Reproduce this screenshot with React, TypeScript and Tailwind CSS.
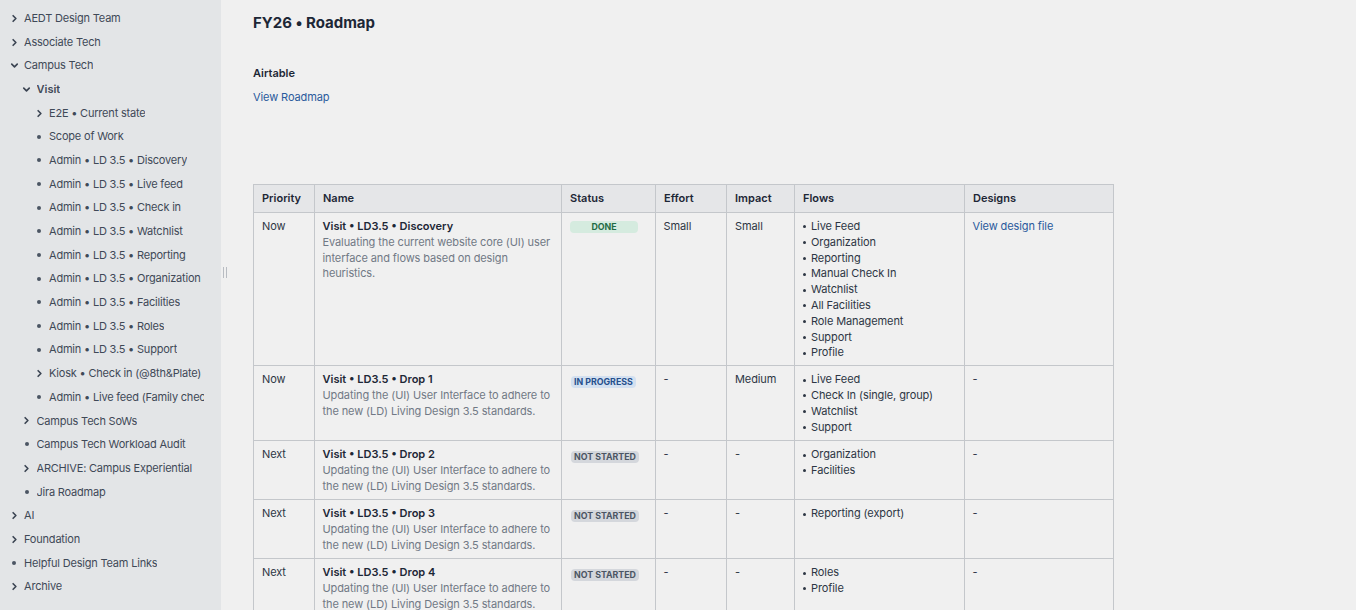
import { ChevronRight, ChevronDown } from 'lucide-react'

type Node = { label: string; depth: number; icon: 'right' | 'down' | 'dot'; bold?: boolean }

const tree: Node[] = [
  { label: 'AEDT Design Team', depth: 0, icon: 'right' },
  { label: 'Associate Tech', depth: 0, icon: 'right' },
  { label: 'Campus Tech', depth: 0, icon: 'down' },
  { label: 'Visit', depth: 1, icon: 'down', bold: true },
  { label: 'E2E • Current state', depth: 2, icon: 'right' },
  { label: 'Scope of Work', depth: 2, icon: 'dot' },
  { label: 'Admin • LD 3.5 • Discovery', depth: 2, icon: 'dot' },
  { label: 'Admin • LD 3.5 • Live feed', depth: 2, icon: 'dot' },
  { label: 'Admin • LD 3.5 • Check in', depth: 2, icon: 'dot' },
  { label: 'Admin • LD 3.5 • Watchlist', depth: 2, icon: 'dot' },
  { label: 'Admin • LD 3.5 • Reporting', depth: 2, icon: 'dot' },
  { label: 'Admin • LD 3.5 • Organization', depth: 2, icon: 'dot' },
  { label: 'Admin • LD 3.5 • Facilities', depth: 2, icon: 'dot' },
  { label: 'Admin • LD 3.5 • Roles', depth: 2, icon: 'dot' },
  { label: 'Admin • LD 3.5 • Support', depth: 2, icon: 'dot' },
  { label: 'Kiosk • Check in (@8th&Plate)', depth: 2, icon: 'right' },
  { label: 'Admin • Live feed (Family check-in)', depth: 2, icon: 'dot' },
  { label: 'Campus Tech SoWs', depth: 1, icon: 'right' },
  { label: 'Campus Tech Workload Audit', depth: 1, icon: 'dot' },
  { label: 'ARCHIVE: Campus Experiential', depth: 1, icon: 'right' },
  { label: 'Jira Roadmap', depth: 1, icon: 'dot' },
  { label: 'AI', depth: 0, icon: 'right' },
  { label: 'Foundation', depth: 0, icon: 'right' },
  { label: 'Helpful Design Team Links', depth: 0, icon: 'dot' },
  { label: 'Archive', depth: 0, icon: 'right' },
]

const drop = 'Updating the (UI) User Interface to adhere to the new (LD) Living Design 3.5 standards.'

type Row = {
  height: string
  priority: string
  title: string
  desc: string
  status: 'DONE' | 'IN PROGRESS' | 'NOT STARTED'
  effort: string
  impact: string
  flows: string[]
  design: string
}

const rows: Row[] = [
  {
    height: 'h-[153px]',
    priority: 'Now',
    title: 'Visit • LD3.5 • Discovery',
    desc: 'Evaluating the current website core (UI) user interface and flows based on design heuristics.',
    status: 'DONE',
    effort: 'Small',
    impact: 'Small',
    flows: ['Live Feed', 'Organization', 'Reporting', 'Manual Check In', 'Watchlist', 'All Facilities', 'Role Management', 'Support', 'Profile'],
    design: 'View design file',
  },
  {
    height: 'h-[75px]',
    priority: 'Now',
    title: 'Visit • LD3.5 • Drop 1',
    desc: drop,
    status: 'IN PROGRESS',
    effort: '-',
    impact: 'Medium',
    flows: ['Live Feed', 'Check In (single, group)', 'Watchlist', 'Support'],
    design: '-',
  },
  { height: 'h-[59px]', priority: 'Next', title: 'Visit • LD3.5 • Drop 2', desc: drop, status: 'NOT STARTED', effort: '-', impact: '-', flows: ['Organization', 'Facilities'], design: '-' },
  { height: 'h-[59px]', priority: 'Next', title: 'Visit • LD3.5 • Drop 3', desc: drop, status: 'NOT STARTED', effort: '-', impact: '-', flows: ['Reporting (export)'], design: '-' },
  { height: 'h-[59px]', priority: 'Next', title: 'Visit • LD3.5 • Drop 4', desc: drop, status: 'NOT STARTED', effort: '-', impact: '-', flows: ['Roles', 'Profile'], design: '-' },
]

function TreeIcon({ icon }: { icon: Node['icon'] }) {
  if (icon === 'right') return <ChevronRight size={11} strokeWidth={3.6} className="shrink-0 text-[#3b4452]" />
  if (icon === 'down') return <ChevronDown size={11} strokeWidth={3.6} className="shrink-0 text-[#3b4452]" />
  return <span className="w-[4px] h-[4px] rounded-full bg-[#4b5563]" />
}

function Status({ status }: { status: Row['status'] }) {
  if (status === 'DONE') {
    return (
      <span className="flex w-[68px] h-[12px] items-center justify-center rounded-sm bg-[#d5ebdf] text-[8.8px] font-bold tracking-normal text-[#1f6b45]">
        DONE
      </span>
    )
  }
  if (status === 'IN PROGRESS') {
    return (
      <span className="ml-[0.5px] inline-flex h-[12px] items-center rounded-sm bg-[#d3e0f0] px-[3.5px] text-[8.8px] font-bold tracking-normal text-[#264f8c]">
        IN PROGRESS
      </span>
    )
  }
  return (
    <span className="ml-[0.5px] inline-flex h-[12px] items-center rounded-sm bg-[#d4d7dc] px-[3.5px] text-[8.8px] font-bold tracking-normal text-[#4b5563]">
      NOT STARTED
    </span>
  )
}

export default function App() {
  return (
    <div className="flex h-[610px] overflow-hidden bg-[#f0f0f0] font-['Inter',sans-serif] text-[11px] tracking-[-0.1px] text-[#2d3644]">
      {/* Sidebar */}
      <aside className="w-[221px] shrink-0 bg-[#e3e5e7] pt-[6.5px] pr-[17px] tracking-[-0.2px]">
        {tree.map((n) => (
          <div key={n.label} className={`flex h-[23.68px] items-center ${n.depth === 0 ? 'pl-[8.5px]' : n.depth === 1 ? 'pl-[21px]' : 'pl-[33.5px]'}`}>
            <span className="flex w-[11px] shrink-0 items-center justify-center">
              <TreeIcon icon={n.icon} />
            </span>
            <span className={`ml-[4.5px] overflow-hidden whitespace-nowrap ${n.bold ? 'font-semibold tracking-normal' : ''} text-[#3f4957]`}>{n.label}</span>
          </div>
        ))}
      </aside>

      {/* Resize handle */}
      <div className="flex w-[8px] shrink-0 items-center justify-center pb-[66px]">
        <div className="h-[11px] w-[4px] border-x border-[#b8bcc2]" />
      </div>

      {/* Main */}
      <main className="flex-1 pl-[24px]">
        <h1 className="mt-[12px] text-[15px] leading-[22px] font-bold tracking-[-0.02px] text-[#1d2736]">FY26 • Roadmap</h1>
        <h2 className="mt-[31px] text-[11px] leading-[16px] font-semibold tracking-normal text-[#1d2736]">Airtable</h2>
        <a className="mt-[8px] block leading-[16px] text-[#2a5a9c]">View Roadmap</a>

        <table className="mt-[79px] w-[860px] table-fixed border-collapse border border-[#c4c7cb]">
          <colgroup>
            <col className="w-[61px]" />
            <col className="w-[247px]" />
            <col className="w-[94px]" />
            <col className="w-[71px]" />
            <col className="w-[68px]" />
            <col className="w-[170px]" />
            <col className="w-[149px]" />
          </colgroup>
          <thead>
            <tr className="h-[28px] bg-[#e5e6e8] text-left">
              {['Priority', 'Name', 'Status', 'Effort', 'Impact', 'Flows', 'Designs'].map((h) => (
                <th key={h} className="border border-[#c4c7cb] pb-[1px] pl-[8px] font-semibold tracking-normal text-[#1d2736]">
                  {h}
                </th>
              ))}
            </tr>
          </thead>
          <tbody>
            {rows.map((r) => (
              <tr key={r.title} className={`${r.height} align-top leading-[15.8px]`}>
                <td className="border border-[#c4c7cb] pl-[8px] pr-[4px] pt-[6px] pb-[4px]">{r.priority}</td>
                <td className="border border-[#c4c7cb] pl-[7.5px] pr-[4px] pt-[6px] pb-[4px]">
                  <div className="font-semibold tracking-normal text-[#1d2736]">{r.title}</div>
                  <div className="text-[#717985]">{r.desc}</div>
                </td>
                <td className="border border-[#c4c7cb] pl-[8px] pr-[4px] pt-[8px] pb-[4px]">
                  <Status status={r.status} />
                </td>
                <td className="border border-[#c4c7cb] pl-[7.5px] pr-[4px] pt-[6px] pb-[4px]">{r.effort}</td>
                <td className="border border-[#c4c7cb] pl-[8px] pr-[4px] pt-[6px] pb-[4px]">{r.impact}</td>
                <td className="border border-[#c4c7cb] pl-[8px] pr-[4px] pt-[6px] pb-[4px]">
                  {r.flows.map((f) => (
                    <div key={f} className="flex items-center">
                      <span className="mr-[5px] h-[3px] w-[3px] rounded-full bg-[#2d3644]" />
                      {f}
                    </div>
                  ))}
                </td>
                <td className="border border-[#c4c7cb] pl-[7.5px] pr-[4px] pt-[6px] pb-[4px]">
                  {r.design === '-' ? '-' : <a className="text-[#2a5a9c]">{r.design}</a>}
                </td>
              </tr>
            ))}
          </tbody>
        </table>
      </main>
    </div>
  )
}
